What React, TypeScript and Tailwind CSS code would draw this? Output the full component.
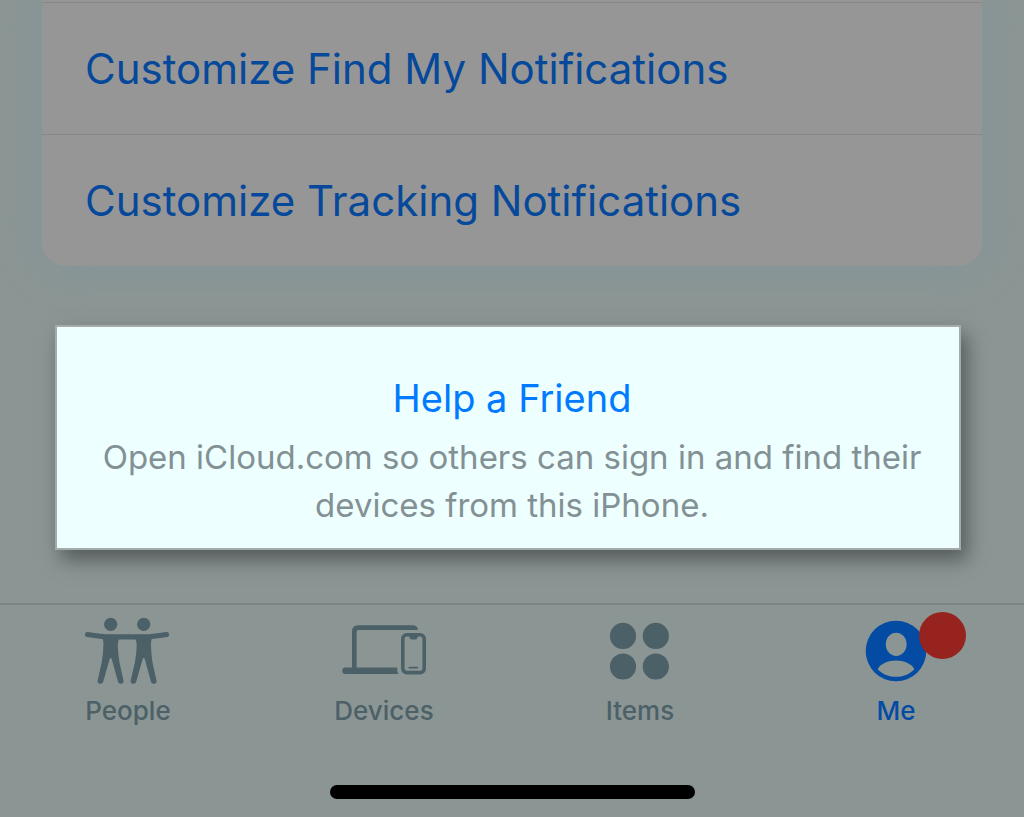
import { ReactNode, useState } from "react";

const PeopleIcon = () => (
  <svg viewBox="0 0 120 76" fill="currentColor" className="h-[76px] w-[120px]" aria-hidden="true">
    <circle cx="42.7" cy="13.3" r="6.6" />
    <circle cx="75.7" cy="13.3" r="6.6" />
    <path
      d="M19.5 23.5C27 24.7 34 25.8 42 25.8H76C84 25.8 91 24.7 98.5 23.5"
      fill="none"
      stroke="currentColor"
      strokeWidth="5.2"
      strokeLinecap="round"
    />
    <path d="M33 25Q35.6 28 35.5 32Q35.3 42 33.8 51L29.7 69.2A2.8 2.8 0 0 0 35.2 70.7L41.6 48.2Q42.7 45.6 43.8 48.2L50 70.7A2.8 2.8 0 0 0 55.4 69.2L51.4 51Q49.9 42 49.8 34Q49.7 28 54 25Z" />
    <path d="M64.5 25Q68.7 28 68.7 34Q68.6 42 67 51L62.7 69.2A2.8 2.8 0 0 0 68.2 70.7L74.6 48.2Q75.7 45.6 76.8 48.2L83 70.7A2.8 2.8 0 0 0 88.4 69.2L84.4 51Q83 42 82.9 32Q82.8 28 85.5 25Z" />
  </svg>
);

const DevicesIcon = () => (
  <svg viewBox="0 0 120 76" fill="currentColor" className="h-[76px] w-[120px]" aria-hidden="true">
    <path d="M28 57V20.5Q28 14.3 34.2 14.3H88.5Q93.5 14.3 94 18.9H34.5Q32.6 18.9 32.6 20.8V57Z" />
    <path d="M21.6 56.4H73.2V59Q73.2 61.4 74.6 63H21.6A3.3 3.3 0 0 1 21.6 56.4Z" />
    <rect x="78.8" y="23.8" width="21.4" height="37.8" rx="4" fill="none" stroke="currentColor" strokeWidth="3.6" />
    <path d="M84.8 25H94.2L93 27.4Q92.6 28.4 91.4 28.4H87.6Q86.4 28.4 86 27.4Z" />
    <rect x="84.4" y="55.8" width="9.8" height="1.8" rx="0.9" />
  </svg>
);

const ItemsIcon = () => (
  <svg viewBox="0 0 120 76" fill="currentColor" className="h-[76px] w-[120px]" aria-hidden="true">
    <circle cx="43" cy="24.9" r="13.1" />
    <circle cx="75.8" cy="24.9" r="13.1" />
    <circle cx="43" cy="55.5" r="13.1" />
    <circle cx="75.8" cy="55.5" r="13.1" />
  </svg>
);

const MeIcon = () => (
  <svg viewBox="0 0 120 76" fill="currentColor" className="h-[76px] w-[120px]" aria-hidden="true">
    <circle cx="60" cy="40" r="30.3" />
    <ellipse cx="60.2" cy="33.3" rx="10.4" ry="11.6" className="text-[#8b9594]" />
    <path
      d="M41.6 58.2C45 52.5 52 49.6 60 49.6S75 52.5 78.4 58.2C73.5 63.3 67 65.8 60 65.8S46.5 63.3 41.6 58.2Z"
      className="text-[#8b9594]"
    />
  </svg>
);

interface Tab {
  label: string;
  icon: ReactNode;
  badge?: boolean;
}

const tabs: Tab[] = [
  { label: "People", icon: <PeopleIcon /> },
  { label: "Devices", icon: <DevicesIcon /> },
  { label: "Items", icon: <ItemsIcon /> },
  { label: "Me", icon: <MeIcon />, badge: true }
];

const settings = ["Customize Find My Notifications", "Customize Tracking Notifications"];

export default function App() {
  const [active, setActive] = useState("Me");

  return (
    <div className="flex min-h-screen flex-col overflow-x-hidden bg-[#8b9594] font-['Inter','Liberation_Sans',sans-serif]">
      <main className="flex-1 pb-[53px]">
        <ul className="mx-[42px] rounded-b-[24px] bg-[#969696] pt-[2px] shadow-[0_0_40px_4px_#85959a]">
          {settings.map((item) => (
            <li key={item} className="border-t border-[#858788]">
              <button
                type="button"
                className="flex h-[131px] w-full items-center px-[43px] text-left text-[42px] text-[#06489a]"
              >
                {item}
              </button>
            </li>
          ))}
        </ul>

        <section className="mt-[59px] mr-[63px] ml-[55px] border-2 border-[#a5abab] bg-[#edffff] pt-[47px] pr-6 pb-[19px] pl-8 text-center shadow-[6px_10px_18px_0px_#555c5b]">
          <button type="button" className="text-[38px] leading-[48px] text-[#007aff]">
            Help a Friend
          </button>
          <p className="mt-[11px] text-[33px] leading-[48px] text-[#839094]">
            Open iCloud.com so others can sign in and find their devices from this iPhone.
          </p>
        </section>
      </main>

      <footer className="relative border-t-2 border-[#7b8485] bg-[#8b9594] pb-[18px]">
        <nav className="grid grid-cols-4">
          {tabs.map(({ label, icon, badge }) => (
            <button
              key={label}
              type="button"
              onClick={() => setActive(label)}
              aria-current={active === label ? "page" : undefined}
              className={`flex flex-col items-center gap-2 pt-[6px] ${
                active === label ? "text-[#034ba3]" : "text-[#4c6067]"
              }`}
            >
              <span className="relative">
                {icon}
                {badge && <span className="absolute top-px left-[83px] size-[47px] rounded-full bg-[#96231d]" />}
              </span>
              <span className="text-[26px] leading-[32px] font-medium">{label}</span>
            </button>
          ))}
        </nav>
        <div className="mx-auto mt-[58px] h-[14px] w-[365px] rounded-full bg-black" />
      </footer>
    </div>
  );
}
